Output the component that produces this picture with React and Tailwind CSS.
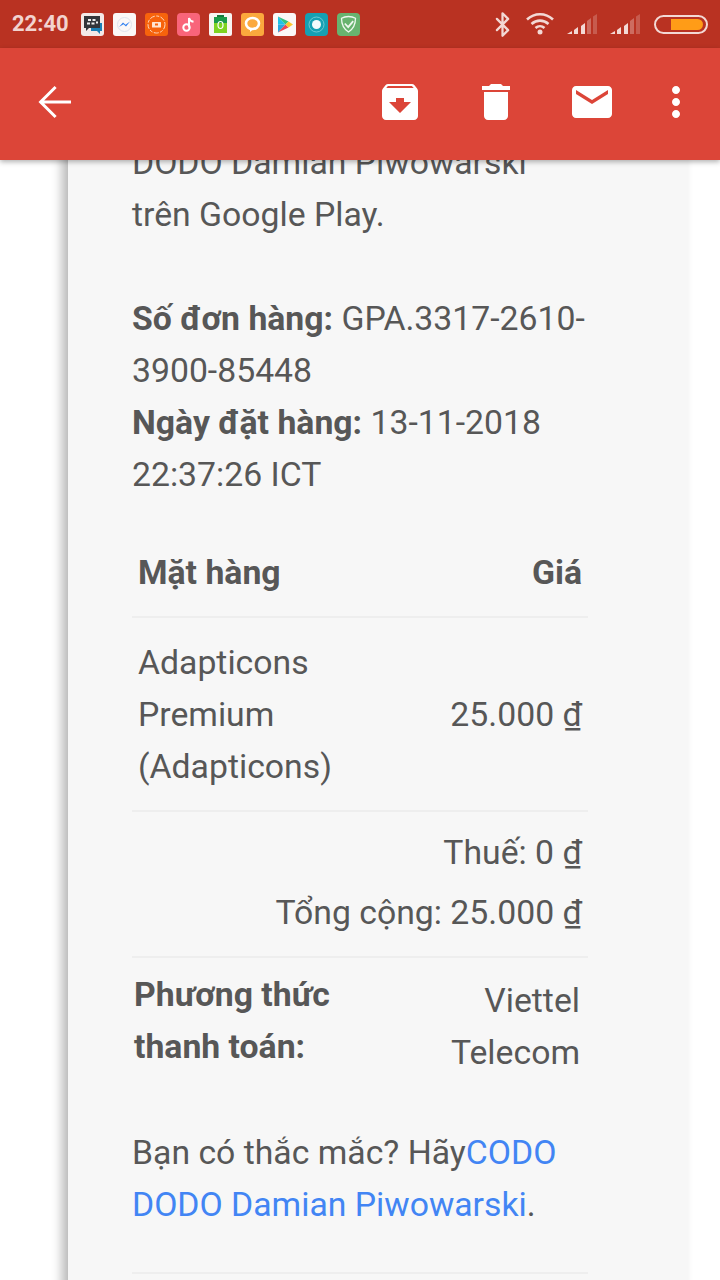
import { Bluetooth } from "lucide-react";

const roboto = "font-['Roboto',sans-serif]";

// tiny notification icons in the status bar, 23x23
function NotifIcons() {
  return (
    <div className="flex items-center gap-[9px] ml-[11px]">
      {/* bbm */}
      <svg width="23" height="23" viewBox="0 0 23 23">
        <rect width="23" height="23" rx="3" fill="#f4e9e7" />
        <path d="M10 10h11v8h-2v3l-3-3h-6z" fill="#1b7fb5" />
        <path d="M3 3h16v12H8l-3 3v-3H3z" fill="#33353a" />
        <path d="M7 6h3v2H7zM11.500 6h3v2h-3zM6 9.500h3v2H6zM10.500 9.500h3v2h-3zM15 8.500h2v2h-2z" fill="#eee" />
      </svg>
      {/* messenger */}
      <svg width="23" height="23" viewBox="0 0 23 23">
        <rect width="23" height="23" rx="3" fill="#fbf8f7" />
        <circle cx="11.500" cy="11.500" r="7" fill="none" stroke="#dfe4ee" strokeWidth="1" />
        <path d="M6 14l4-4.500 2.500 2.200L17 8.500l-4 5-2.500-2.200z" fill="#2f7ff0" />
      </svg>
      {/* orange circle */}
      <svg width="23" height="23" viewBox="0 0 23 23">
        <rect width="23" height="23" rx="3" fill="#f7630c" />
        <circle cx="11.500" cy="11.500" r="8.500" fill="none" stroke="#ffd9c0" strokeWidth="1" strokeDasharray="5 1.500 3 1.500" />
        <rect x="7" y="9" width="9" height="5.500" rx="0.500" fill="#ffe3d0" />
        <rect x="10" y="10.500" width="3" height="2" fill="#f7630c" />
      </svg>
      {/* music */}
      <svg width="23" height="23" viewBox="0 0 23 23">
        <rect width="23" height="23" rx="4" fill="#f9657a" />
        <circle cx="9.500" cy="14.500" r="3.200" fill="none" stroke="#fff" strokeWidth="2" />
        <path d="M12 14.500V5c.6 2.500 2.500 3.500 4.500 3.800" fill="none" stroke="#fff" strokeWidth="2" />
      </svg>
      {/* battery app */}
      <svg width="23" height="23" viewBox="0 0 23 23">
        <rect width="23" height="23" rx="2" fill="#f8f4f2" />
        <rect x="8" y="2" width="7" height="3" fill="#167a3c" />
        <rect x="5" y="4" width="13" height="6" fill="#1c9a49" />
        <rect x="5" y="10" width="13" height="10" fill="#7ed321" />
        <ellipse cx="11.500" cy="12" rx="2.500" ry="3.500" fill="none" stroke="#fff" strokeWidth="1.200" />
      </svg>
      {/* chat */}
      <svg width="23" height="23" viewBox="0 0 23 23">
        <rect width="23" height="23" rx="3" fill="#fba93d" />
        <ellipse cx="11.500" cy="10.500" rx="6.500" ry="5.500" fill="none" stroke="#fff" strokeWidth="2.600" />
        <path d="M9 15.500v3.500l3.500-3" fill="#fff" />
      </svg>
      {/* play store */}
      <svg width="23" height="23" viewBox="0 0 23 23">
        <rect width="23" height="23" rx="3" fill="#fbf8f7" />
        <path d="M5 3.500v8h7.500z" fill="#1fc3e8" />
        <path d="M5 19.500v-8h7.500z" fill="#2aa7e0" />
        <path d="M5 3.500l7.500 8 3-3z" fill="#33c481" />
        <path d="M5 19.500l7.500-8 3 3z" fill="#ef4453" />
        <path d="M15.500 8.500l4.500 3-4.500 3-3-3z" fill="#fdc72e" />
      </svg>
      {/* teal dot */}
      <svg width="23" height="23" viewBox="0 0 23 23">
        <rect width="23" height="23" rx="4" fill="#15a0b3" />
        <circle cx="11.500" cy="11.500" r="7.500" fill="none" stroke="#7fd0da" strokeWidth="0.800" />
        <circle cx="11.500" cy="11.500" r="4.500" fill="#f3fbfc" />
      </svg>
      {/* adguard */}
      <svg width="23" height="23" viewBox="0 0 23 23">
        <rect width="23" height="23" rx="4" fill="#68b36f" />
        <path d="M11.500 3.500c2.500 0 5 .6 7 1.800 0 6-1.800 10.500-7 13.700-5.200-3.200-7-7.700-7-13.700 2-1.200 4.500-1.800 7-1.800z" fill="none" stroke="#eef8ef" strokeWidth="1.300" />
        <path d="M7.800 10.500l3.400 3.600 5-6" fill="none" stroke="#eef8ef" strokeWidth="1.800" />
      </svg>
    </div>
  );
}

function Signal() {
  return (
    <svg width="30" height="20" viewBox="0 0 30 20">
      <path d="M0 20l5-3v3z" fill="#f3d9d5" />
      <path d="M7 16l4-3v7H7z" fill="#f3d9d5" />
      <path d="M14 12l4-3v11h-4z" fill="#f3d9d5" />
      <path d="M20 7l4-3v16h-4z" fill="#f3d9d5" fillOpacity="0.35" />
      <path d="M26 2.500L30 0v20h-4z" fill="#f3d9d5" fillOpacity="0.25" />
    </svg>
  );
}

function StatusBar() {
  return (
    <div className="h-12 bg-[#b93222] flex items-center pl-3">
      <span className={`${roboto} text-[22px] font-bold leading-none text-[#f2d3cf] w-[58px]`}>22:40</span>
      <NotifIcons />
      <Bluetooth size={27} strokeWidth={2} className="text-[#f3d9d5] ml-[129px] -mr-[1px]" />
      <svg width="30" height="24" viewBox="0 0 30 24" className="ml-[10px] mb-[2px]">
        <path d="M2 8.500c7.500-7 18.500-7 26 0M6.500 13c5-4.500 12-4.500 17 0M10.500 17c2.600-2.300 6.400-2.300 9 0" fill="none" stroke="#f3d9d5" strokeWidth="2.600" />
        <circle cx="15" cy="21" r="2.500" fill="#f3d9d5" />
      </svg>
      <div className="ml-[12px] flex gap-[13px]">
        <Signal />
        <Signal />
      </div>
      {/* battery */}
      <div className="ml-[14px] w-[54px] h-[19px] border-2 border-[#f3d9d5] rounded-full flex justify-end items-center pr-[3px]">
        <div className="w-[32px] h-[11px] bg-[#ff9c17] rounded-r-full" />
      </div>
    </div>
  );
}

function ToolBar() {
  return (
    <div className="h-[112px] bg-[#dc4538] flex items-start pt-[30px] pl-[31px] pr-[20px] text-white shadow-[0_2px_5px_rgba(0,0,0,0.3)]">
      <svg width="48" height="48" viewBox="0 0 24 24" fill="none" stroke="currentColor" strokeWidth="1.500">
        <path d="M20 12H5M12.300 4.500 4.800 12l7.500 7.500" />
      </svg>
      <svg width="48" height="48" viewBox="0 0 24 24" fill="currentColor" className="ml-auto">
        <path d="M20.540 5.230l-1.390-1.680C18.880 3.210 18.470 3 18 3H6c-.47 0-.88.21-1.160.55L3.460 5.230C3.170 5.570 3 6.020 3 6.500V19c0 1.100.9 2 2 2h14c1.100 0 2-.9 2-2V6.500c0-.48-.17-.93-.46-1.270zM12 17.500L6.500 12H10v-2h4v2h3.500L12 17.500zM5.120 5l.81-1h12l.94 1H5.120z" />
      </svg>
      <svg width="48" height="48" viewBox="0 0 24 24" fill="currentColor" className="ml-12">
        <path d="M6 19c0 1.100.9 2 2 2h8c1.100 0 2-.9 2-2V7H6v12zM19 4h-3.500l-1-1h-5l-1 1H5v2h14V4z" />
      </svg>
      <svg width="48" height="48" viewBox="0 0 24 24" fill="currentColor" className="ml-12">
        <path d="M20 4H4c-1.100 0-1.990.9-1.990 2L2 18c0 1.100.9 2 2 2h16c1.100 0 2-.9 2-2V6c0-1.100-.9-2-2-2zm0 4l-8 5-8-5V6l8 5 8-5v2z" />
      </svg>
      <svg width="48" height="48" viewBox="0 0 24 24" fill="currentColor" className="ml-9">
        <path d="M12 8c1.100 0 2-.9 2-2s-.9-2-2-2-2 .9-2 2 .9 2 2 2zm0 2c-1.100 0-2 .9-2 2s.9 2 2 2 2-.9 2-2-.9-2-2-2zm0 6c-1.100 0-2 .9-2 2s.9 2 2 2 2-.9 2-2-.9-2-2-2z" />
      </svg>
    </div>
  );
}

export default function App() {
  return (
    <div className={`${roboto} w-[720px] h-[1280px] bg-white overflow-hidden flex flex-col text-[33.75px] leading-[52px] text-[#575757]`}>
      <div className="relative z-10">
        <StatusBar />
        <ToolBar />
      </div>

      <div className="flex-1 overflow-hidden">
        <div className="ml-[68px] w-[620px] -mt-[23px] bg-[#f7f7f7] pl-16 pr-[100px] pb-10 shadow-[-6px_0_10px_rgba(0,0,0,0.28)]">
          <p>
            DODO Damian Piwowarski
            <br />
            trên Google Play.
          </p>

          <p className="mt-[52px]">
            <b className="font-bold">Số đơn hàng:</b> GPA.3317-2610-3900-85448
            <br />
            <b className="font-bold">Ngày đặt hàng:</b> 13-11-2018 22:37:26 ICT
          </p>

          {/* items */}
          <div className="mt-[46px] flex justify-between px-[6px] pb-[17px] font-bold border-b-2 border-[#eeeeee]">
            <span>Mặt hàng</span>
            <span>Giá</span>
          </div>
          <div className="flex justify-between items-center px-[6px] pt-[19px] pb-[17px] border-b-2 border-[#eeeeee]">
            <span className="w-[220px]">Adapticons Premium (Adapticons)</span>
            <span>25.000 ₫</span>
          </div>
          <div className="flex flex-col items-end gap-2 px-[6px] pt-[15px] pb-[17px] border-b-2 border-[#eeeeee]">
            <span>Thuế: 0 ₫</span>
            <span>Tổng cộng: 25.000 ₫</span>
          </div>

          {/* payment */}
          <div className="flex justify-between pl-[2px] pt-[11px] pr-2">
            <span className="font-bold w-[220px]">Phương thức thanh toán:</span>
            <span className="text-right w-[140px] mt-[6px]">Viettel Telecom</span>
          </div>

          <p className="mt-[48px]">
            Bạn có thắc mắc? Hãy<a className="text-[#4285f4]">CODO DODO Damian Piwowarski</a>.
          </p>

          <div className="mt-[41px] h-[2px] bg-[#eeeeee]" />
        </div>
      </div>
    </div>
  );
}
